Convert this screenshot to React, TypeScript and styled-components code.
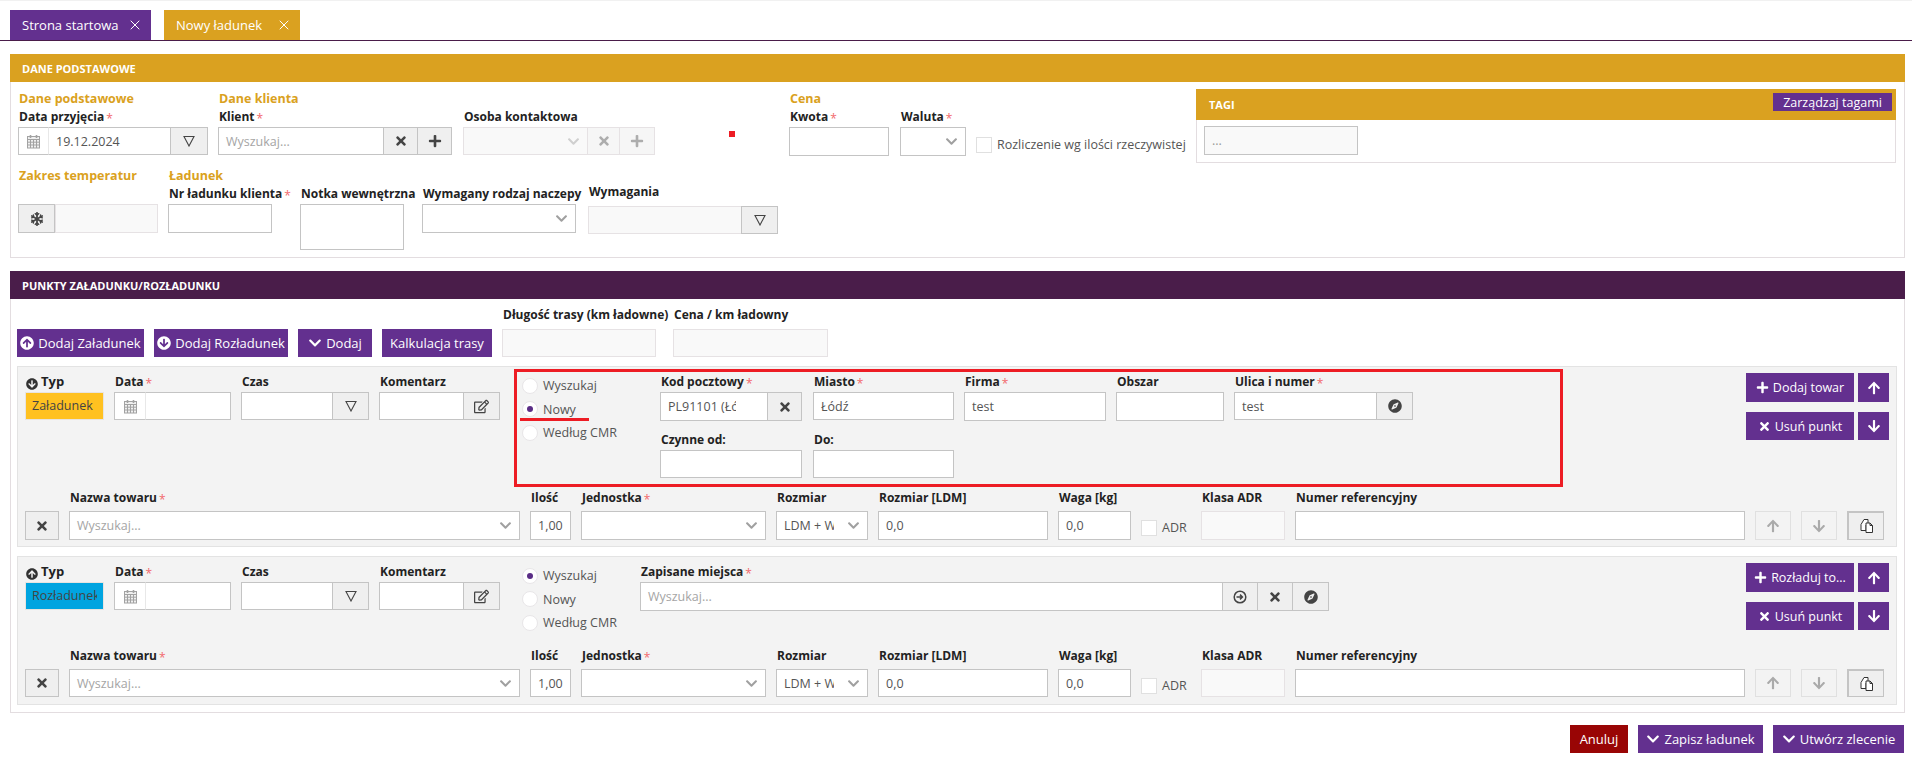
import React from "react";
import styled, { createGlobalStyle } from "styled-components";
import {
  FaTimes, FaPlus, FaChevronDown, FaSnowflake, FaRegEdit, FaCompass, FaArrowUp, FaArrowDown,
  FaArrowCircleUp, FaArrowCircleDown,
} from "react-icons/fa";
import { X } from "lucide-react";

const Global = createGlobalStyle`
  html, body { margin: 0; padding: 0; background: #fff; }
  body { font-family: "Open Sans", "Noto Sans", sans-serif; font-size: 12.5px; color: #444; }
  * { box-sizing: border-box; }
`;

const Page = styled.div`
  width: 1912px; height: 765px; overflow: hidden; padding: 0 7px 0 10px; position: relative;
  border-top: 1px solid #f1f1f1;
`;
const TopMark = styled.div`
  position: absolute; top: -1px; right: 7px; width: 30px; height: 1px; background: #c8102e;
`;
const TabBar = styled.div`
  display: flex; gap: 13px; padding-top: 9px; margin: 0 -7px 13px -10px; padding-left: 10px;
  border-bottom: 1px solid #4a1d4a; height: 40px;
`;
const Tab = styled.div<{ $c: string; $w: number }>`
  width: ${(p) => p.$w}px; height: 30px; background: ${(p) => p.$c}; color: #fff; font-size: 13px;
  display: flex; align-items: center; justify-content: space-between; padding: 0 8px 0 12px;
`;
const Section = styled.section<{ $mb: number }>`
  border: 1px solid #e3dde0; border-top: 0; margin-bottom: ${(p) => p.$mb}px;
`;
const Header = styled.header<{ $c: string }>`
  margin: 0 -1px; height: 28px; background: ${(p) => p.$c}; color: #fff; font-weight: 700;
  font-size: 11px; display: flex; align-items: center; padding: 0 12px;
`;
const Body = styled.div<{ $h?: number; $pt: number }>`
  padding: ${(p) => p.$pt}px 7px 7px 6px; ${(p) => (p.$h ? `height: ${p.$h}px;` : "")}
`;
const Row = styled.div`
  display: flex; gap: 10px; align-items: flex-start;
`;
const BasicTop = styled(Row)`
  height: 74px; margin-left: 1px;
`;
const BasicBottom = styled(Row)`
  margin-top: 3px; margin-left: 1px;
`;
const Field = styled.div<{ $w: number; $ml?: number }>`
  width: ${(p) => p.$w}px; flex: none; margin-left: ${(p) => p.$ml ?? 0}px; white-space: nowrap;
`;
const Title = styled.div`
  height: 18px; line-height: 18px; color: #daa120; font-weight: 700; font-size: 12.5px; margin-left: 1px;
`;
const Label = styled.div<{ $mb?: number; $mt?: number }>`
  height: 17px; line-height: 17px; margin: ${(p) => p.$mt ?? 0}px 0 ${(p) => p.$mb ?? 2}px 1px;
  font-size: 12px; font-weight: 700; color: #222;
`;
const Star = styled.span`
  color: #f2686c; font-weight: 400; margin-left: 2px; font-size: 12px; position: relative; top: 2px;
`;
const Group = styled.div<{ $h?: number }>`
  display: flex; height: ${(p) => p.$h ?? 28}px; width: 100%;
`;
const Input = styled.div<{ $w?: number; $dis?: boolean; $ph?: boolean; $open?: boolean }>`
  ${(p) => (p.$w ? `width: ${p.$w}px; flex: none;` : "flex: 1; min-width: 0;")}
  height: 100%; border: 1px solid ${(p) => (p.$dis ? "#e6e2e4" : "#c4c4c4")};
  ${(p) => (p.$open ? "border-left: 0;" : "")}
  background: ${(p) => (p.$dis ? "#f9f9f9" : "#fff")};
  color: ${(p) => (p.$ph ? "#a5a5a5" : "#555")}; font-size: 12.5px;
  display: flex; align-items: center; justify-content: space-between; padding: 0 7px; overflow: hidden;
  white-space: nowrap;
`;
const Clip = styled.span<{ $w: number }>`
  display: block; width: ${(p) => p.$w}px; overflow: hidden; flex: none;
`;
const Addon = styled.div<{ $w: number; $dis?: boolean }>`
  width: ${(p) => p.$w}px; flex: none; height: 100%; display: flex; align-items: center; justify-content: center;
  border: 1px solid ${(p) => (p.$dis ? "#e6e2e4" : "#c4c4c4")};
  background: ${(p) => (p.$dis ? "#f6f6f6" : "#efefef")};
  color: ${(p) => (p.$dis ? "#adadad" : "#444")}; font-size: 14px; margin-left: -1px;
  &:first-child { margin-left: 0; }
`;
const CalAddon = styled.div<{ $w: number }>`
  width: ${(p) => p.$w}px; flex: none; height: 100%; display: flex; align-items: center; justify-content: center;
  background: #fff; border: 1px solid #c4c4c4; border-right-color: #e8e8e8;
`;
const Chevron = styled(FaChevronDown)<{ $c?: string }>`
  color: ${(p) => p.$c ?? "#a0a0a0"}; font-size: 13px; flex: none;
`;
const Square = styled.div`
  width: 6px; height: 6px; background: #ed1c24; flex: none; margin: 41px 0 0 64px;
`;
const CheckRow = styled.div<{ $mt: number; $w: number }>`
  width: ${(p) => p.$w}px; flex: none; display: flex; align-items: center; gap: 5px; margin-top: ${(p) => p.$mt}px;
  font-size: 12.5px; color: #555; white-space: nowrap;
`;
const Box = styled.span`
  width: 16px; height: 16px; background: #fff; border: 1px solid #e0e0e0; flex: none;
`;
const Tags = styled.div`
  width: 700px; height: 74px; margin-top: -1px; border: 1px solid #e3dde0; border-top: 0; flex: none;
`;
const TagsHead = styled.div`
  margin: 0 -1px; height: 31px; background: #daa120; color: #fff; font-weight: 700; font-size: 11px;
  display: flex; align-items: center; justify-content: space-between; padding: 0 4px 0 13px;
`;
const Purple = styled.div<{ $w?: number; $h?: number; $fs?: number; $bg?: string }>`
  ${(p) => (p.$w ? `width: ${p.$w}px;` : "")} height: ${(p) => p.$h ?? 28}px; flex: none;
  background: ${(p) => p.$bg ?? "#63308f"}; color: #fff; font-size: ${(p) => p.$fs ?? 13}px; font-weight: 400;
  display: flex; align-items: center; justify-content: center; gap: 4px; white-space: nowrap;
`;
const ManageTags = styled(Purple)`
  margin-top: -5px;
`;
const TagInput = styled.div`
  width: 154px; height: 29px; margin: 6px 0 0 7px; border: 1px solid #c4c4c4; background: #f9f9f9; color: #999;
  padding: 0 7px; line-height: 27px;
`;
const Toolbar = styled(Row)`
  align-items: flex-end; margin-left: 0; margin-bottom: 9px;
`;
const Card = styled.div<{ $pb: number }>`
  background: #f3f3f3; border: 1px solid #e3e3e3; padding: 2px 7px ${(p) => p.$pb}px 7px; margin-bottom: 9px;
  &:last-child { margin-bottom: 0; }
`;
const CardTop = styled.div<{ $h: number }>`
  display: flex; gap: 10px; align-items: flex-start; height: ${(p) => p.$h}px;
`;
const Lead = styled.div<{ $w: number }>`
  width: ${(p) => p.$w}px; flex: none; padding-top: 4px; white-space: nowrap;
`;
const TypeLabel = styled(Label)`
  margin-left: 0; display: flex; align-items: center; gap: 3px; font-size: 13px;
`;
const TypeIcon = styled.span`
  font-size: 12px; color: #333; display: flex; margin: 5px 0 0 1px;
`;
const Badge = styled.div<{ $c: string }>`
  height: 28px; background: ${(p) => p.$c}; border: 1px solid #e8e4e0; color: #444; font-size: 12.5px;
  line-height: 26px; padding: 0 6px; overflow: hidden; white-space: nowrap;
`;
const Location = styled.div<{ $on?: boolean; $h: number }>`
  width: 1049px; height: ${(p) => p.$h}px; flex: none; margin-left: 4px; display: flex; align-items: flex-start;
  border: 3px solid ${(p) => (p.$on ? "#ed1c24" : "transparent")}; padding: 1px 0 0 5px;
`;
const Radios = styled.div<{ $w: number }>`
  width: ${(p) => p.$w}px; flex: none; padding-top: 1px;
`;
const RadioItem = styled.div`
  height: 23.5px; display: flex; align-items: center; gap: 5px; color: #555; font-size: 12.5px; position: relative;
`;
const Circle = styled.span<{ $on?: boolean }>`
  width: 16px; height: 16px; border-radius: 50%; background: #fff; border: 1px solid #e8e6e8; flex: none;
  display: flex; align-items: center; justify-content: center;
  &::after { content: ""; width: 6px; height: 6px; border-radius: 50%; background: ${(p) => (p.$on ? "#5a2d86" : "transparent")}; }
`;
const Underline = styled.span`
  position: absolute; left: -2px; top: 20px; width: 69px; height: 3px; background: #ed1c24;
`;
const Places = styled.div`
  display: flex; flex-wrap: wrap; column-gap: 10px; row-gap: 5px; width: 760px; align-content: flex-start;
`;
const PlaceBreak = styled.div`
  flex-basis: 100%; height: 0;
`;
const Side = styled.div`
  margin-left: auto; width: 143px; flex: none; display: grid; grid-template-columns: 108px 31px; gap: 10px 4px; padding-top: 4px;
`;
const Goods = styled(Row)`
  margin-top: 2px;
`;
const DisabledBtn = styled(Addon)`
  margin-left: 0; color: #aaa; background: #f3f3f3; border-color: #e0e0e0; font-size: 14px;
`;
const CopyBtn = styled(Addon)`
  margin-left: 0; border-top-width: 2px; border-left-width: 2px; background: #efefef;
`;
const Footer = styled.div`
  display: flex; justify-content: flex-end; gap: 10px; padding-right: 1px;
`;

const Cal = () => (
  <svg width="15" height="15" viewBox="0 0 15 15" fill="none" stroke="#a2a2a2" strokeWidth="1">
    <rect x="1.5" y="2.5" width="12" height="11.5" fill="#f0f0f0" />
    <path d="M1.5 5.5h12M1.5 8.2h12M1.5 11h12M4.5 5.5V14M7.5 5.5V14M10.5 5.5V14" />
    <path d="M4.5 1v3M10.5 1v3" strokeWidth="1.6" />
  </svg>
);
const Tri = () => (
  <svg width="12" height="12" viewBox="0 0 12 12" fill="none" stroke="#444" strokeWidth="1.1">
    <path d="M1 1.5h10L6 11z" />
  </svg>
);
const CircleArrow = () => (
  <svg width="14" height="14" viewBox="0 0 14 14" fill="none" stroke="#444" strokeWidth="1.5">
    <circle cx="7" cy="7" r="5.8" />
    <path d="M3.5 7h5.5M7 4.6 9.4 7 7 9.4" />
  </svg>
);
const Copy = () => (
  <svg width="15" height="16" viewBox="0 0 15 16" fill="none" stroke="#333" strokeWidth="1">
    <path d="M2 6.5 5 1.5h4v5l-2 .5v5.5H2z" fill="#fff" />
    <path d="M7 5h4l2.5 2.5v7H7z" fill="#fff" />
    <path d="M11 5v2.5h2.5" />
  </svg>
);

const Req = ({ children }: { children: React.ReactNode }) => (
  <>
    {children}
    <Star>*</Star>
  </>
);

const Select = ({ text, ph, clip }: { text?: string; ph?: boolean; clip?: number }) => (
  <Input $ph={ph}>
    {clip ? <Clip $w={clip}>{text}</Clip> : <span>{text}</span>}
    <Chevron />
  </Input>
);

const GoodsRow = ({ h }: { h: number }) => (
  <Goods>
    <Field $w={34}>
      <Label $mb={5}>&nbsp;</Label>
      <Group $h={h}>
        <Addon $w={34}><FaTimes /></Addon>
      </Group>
    </Field>
    <Field $w={451}>
      <Label $mb={5}><Req>Nazwa towaru</Req></Label>
      <Group $h={h}><Select text="Wyszukaj..." ph /></Group>
    </Field>
    <Field $w={41}>
      <Label $mb={5}>Ilość</Label>
      <Group $h={h}><Input>1,00</Input></Group>
    </Field>
    <Field $w={185}>
      <Label $mb={5}><Req>Jednostka</Req></Label>
      <Group $h={h}><Select /></Group>
    </Field>
    <Field $w={92}>
      <Label $mb={5}>Rozmiar</Label>
      <Group $h={h}><Select text="LDM + Waga" clip={50} /></Group>
    </Field>
    <Field $w={170}>
      <Label $mb={5}>Rozmiar [LDM]</Label>
      <Group $h={h}><Input>0,0</Input></Group>
    </Field>
    <Field $w={73}>
      <Label $mb={5}>Waga [kg]</Label>
      <Group $h={h}><Input>0,0</Input></Group>
    </Field>
    <CheckRow $mt={30} $w={50}><Box />ADR</CheckRow>
    <Field $w={84}>
      <Label $mb={5}>Klasa ADR</Label>
      <Group $h={h}><Input $dis /></Group>
    </Field>
    <Field $w={450}>
      <Label $mb={5}>Numer referencyjny</Label>
      <Group $h={h}><Input /></Group>
    </Field>
    <Field $w={36}>
      <Label $mb={5}>&nbsp;</Label>
      <Group $h={h}><DisabledBtn $w={36}><FaArrowUp /></DisabledBtn></Group>
    </Field>
    <Field $w={36}>
      <Label $mb={5}>&nbsp;</Label>
      <Group $h={h}><DisabledBtn $w={36}><FaArrowDown /></DisabledBtn></Group>
    </Field>
    <Field $w={37}>
      <Label $mb={5}>&nbsp;</Label>
      <Group $h={h}><CopyBtn $w={37}><Copy /></CopyBtn></Group>
    </Field>
  </Goods>
);

const PointLead = ({ type, color, icon }: { type: string; color: string; icon: React.ReactNode }) => (
  <>
    <Lead $w={79}>
      <TypeLabel><TypeIcon>{icon}</TypeIcon>Typ</TypeLabel>
      <Badge $c={color}><Clip $w={65}>{type}</Clip></Badge>
    </Lead>
    <Lead $w={117}>
      <Label><Req>Data</Req></Label>
      <Group>
        <CalAddon $w={32}><Cal /></CalAddon>
        <Input $open />
      </Group>
    </Lead>
    <Lead $w={128}>
      <Label>Czas</Label>
      <Group>
        <Input />
        <Addon $w={37}><Tri /></Addon>
      </Group>
    </Lead>
    <Lead $w={121}>
      <Label>Komentarz</Label>
      <Group>
        <Input />
        <Addon $w={37}><FaRegEdit size={15} /></Addon>
      </Group>
    </Lead>
  </>
);

const RadioSet = ({ active, w, mark }: { active: number; w: number; mark?: boolean }) => (
  <Radios $w={w}>
    {["Wyszukaj", "Nowy", "Według CMR"].map((t, i) => (
      <RadioItem key={t}>
        <Circle $on={active === i} />
        {t}
        {mark && i === 1 && <Underline />}
      </RadioItem>
    ))}
  </Radios>
);

export default function App() {
  return (
    <>
      <Global />
      <Page>
        <TopMark />
        <TabBar>
          <Tab $c="#63308f" $w={141}>Strona startowa <X size={16} strokeWidth={1.5} color="#fff" /></Tab>
          <Tab $c="#daa120" $w={136}>Nowy ładunek <X size={16} strokeWidth={1.5} color="#fff" /></Tab>
        </TabBar>

        <Section $mb={13}>
          <Header $c="#daa120">DANE PODSTAWOWE</Header>
          <Body $h={175} $pt={8}>
            <BasicTop>
              <Field $w={190}>
                <Title>Dane podstawowe</Title>
                <Label><Req>Data przyjęcia</Req></Label>
                <Group>
                  <CalAddon $w={31}><Cal /></CalAddon>
                  <Input $w={122} $open>19.12.2024</Input>
                  <Addon $w={38}><Tri /></Addon>
                </Group>
              </Field>
              <Field $w={234}>
                <Title>Dane klienta</Title>
                <Label><Req>Klient</Req></Label>
                <Group>
                  <Input $ph>Wyszukaj...</Input>
                  <Addon $w={35}><FaTimes /></Addon>
                  <Addon $w={35}><FaPlus /></Addon>
                </Group>
              </Field>
              <Field $w={192} $ml={1}>
                <Title>&nbsp;</Title>
                <Label>Osoba kontaktowa</Label>
                <Group>
                  <Input $dis><span /><Chevron $c="#cfcfcf" /></Input>
                  <Addon $w={33} $dis><FaTimes /></Addon>
                  <Addon $w={36} $dis><FaPlus /></Addon>
                </Group>
              </Field>
              <Square />
              <Field $w={100} $ml={44}>
                <Title>Cena</Title>
                <Label><Req>Kwota</Req></Label>
                <Group $h={29}><Input /></Group>
              </Field>
              <Field $w={66} $ml={1}>
                <Title>&nbsp;</Title>
                <Label><Req>Waluta</Req></Label>
                <Group $h={29}><Select /></Group>
              </Field>
              <CheckRow $mt={46} $w={210}><Box />Rozliczenie wg ilości rzeczywistej</CheckRow>
              <Tags>
                <TagsHead>
                  TAGI
                  <ManageTags $w={119} $h={18} $fs={12.5}>Zarządzaj tagami</ManageTags>
                </TagsHead>
                <TagInput>...</TagInput>
              </Tags>
            </BasicTop>
            <BasicBottom>
              <Field $w={140}>
                <Title>Zakres temperatur</Title>
                <Label>&nbsp;</Label>
                <Group $h={29}>
                  <Addon $w={37}><FaSnowflake size={14} /></Addon>
                  <Input $dis />
                </Group>
              </Field>
              <Field $w={104}>
                <Title>Ładunek</Title>
                <Label><Req>Nr ładunku klienta</Req></Label>
                <Group $h={29}><Input /></Group>
              </Field>
              <Field $w={104} $ml={18}>
                <Title>&nbsp;</Title>
                <Label>Notka wewnętrzna</Label>
                <Group $h={46}><Input /></Group>
              </Field>
              <Field $w={154} $ml={8}>
                <Title>&nbsp;</Title>
                <Label>Wymagany rodzaj naczepy</Label>
                <Group $h={29}><Select /></Group>
              </Field>
              <Field $w={190} $ml={2}>
                <Label $mt={16} $mb={6}>Wymagania</Label>
                <Group>
                  <Input $dis />
                  <Addon $w={37}><Tri /></Addon>
                </Group>
              </Field>
            </BasicBottom>
          </Body>
        </Section>

        <Section $mb={12}>
          <Header $c="#4a1d4a">PUNKTY ZAŁADUNKU/ROZŁADUNKU</Header>
          <Body $pt={7}>
            <Toolbar>
              <Purple $w={127}><FaArrowCircleUp size={14} />Dodaj Załadunek</Purple>
              <Purple $w={134}><FaArrowCircleDown size={14} />Dodaj Rozładunek</Purple>
              <Purple $w={74}><FaChevronDown size={14} />Dodaj</Purple>
              <Purple $w={110}>Kalkulacja trasy</Purple>
              <Field $w={154}>
                <Label $mb={6}>Długość trasy (km ładowne)</Label>
                <Group><Input $dis /></Group>
              </Field>
              <Field $w={155} $ml={7}>
                <Label $mb={6}>Cena / km ładowny</Label>
                <Group><Input $dis /></Group>
              </Field>
            </Toolbar>

            <Card $pb={6}>
              <CardTop $h={118}>
                <PointLead type="Załadunek" color="#ffc120" icon={<FaArrowCircleDown />} />
                <Location $on $h={118}>
                  <RadioSet active={1} w={138} mark />
                  <Places>
                    <Field $w={142}>
                      <Label><Req>Kod pocztowy</Req></Label>
                      <Group $h={29}>
                        <Input><Clip $w={68}>PL91101 (Łódź)</Clip></Input>
                        <Addon $w={35}><FaTimes /></Addon>
                      </Group>
                    </Field>
                    <Field $w={141} $ml={1}>
                      <Label><Req>Miasto</Req></Label>
                      <Group><Input>Łódź</Input></Group>
                    </Field>
                    <Field $w={142}>
                      <Label><Req>Firma</Req></Label>
                      <Group $h={29}><Input>test</Input></Group>
                    </Field>
                    <Field $w={108}>
                      <Label>Obszar</Label>
                      <Group $h={29}><Input /></Group>
                    </Field>
                    <Field $w={179}>
                      <Label><Req>Ulica i numer</Req></Label>
                      <Group>
                        <Input>test</Input>
                        <Addon $w={37}><FaCompass size={14} /></Addon>
                      </Group>
                    </Field>
                    <PlaceBreak />
                    <Field $w={142}>
                      <Label>Czynne od:</Label>
                      <Group><Input /></Group>
                    </Field>
                    <Field $w={141} $ml={1}>
                      <Label>Do:</Label>
                      <Group><Input /></Group>
                    </Field>
                  </Places>
                </Location>
                <Side>
                  <Purple $h={29} $fs={12.5}><FaPlus size={13} />Dodaj towar</Purple>
                  <Purple $h={29}><FaArrowUp size={14} /></Purple>
                  <Purple $fs={12.5}><FaTimes size={13} />Usuń punkt</Purple>
                  <Purple><FaArrowDown size={14} /></Purple>
                </Side>
              </CardTop>
              <GoodsRow h={29} />
            </Card>

            <Card $pb={7}>
              <CardTop $h={86}>
                <PointLead type="Rozładunek" color="#00a4e0" icon={<FaArrowCircleUp />} />
                <Location $h={86}>
                  <RadioSet active={0} w={118} />
                  <Field $w={689}>
                    <Label><Req>Zapisane miejsca</Req></Label>
                    <Group $h={29}>
                      <Input $ph>Wyszukaj...</Input>
                      <Addon $w={36}><CircleArrow /></Addon>
                      <Addon $w={36}><FaTimes /></Addon>
                      <Addon $w={37}><FaCompass size={14} /></Addon>
                    </Group>
                  </Field>
                </Location>
                <Side>
                  <Purple $h={29} $fs={12.5}><FaPlus size={13} />Rozładuj to...</Purple>
                  <Purple $h={29}><FaArrowUp size={14} /></Purple>
                  <Purple $fs={12.5}><FaTimes size={13} />Usuń punkt</Purple>
                  <Purple><FaArrowDown size={14} /></Purple>
                </Side>
              </CardTop>
              <GoodsRow h={28} />
            </Card>
          </Body>
        </Section>

        <Footer>
          <Purple $w={58} $bg="#990505">Anuluj</Purple>
          <Purple $w={125}><FaChevronDown size={14} />Zapisz ładunek</Purple>
          <Purple $w={131}><FaChevronDown size={14} />Utwórz zlecenie</Purple>
        </Footer>
      </Page>
    </>
  );
}
